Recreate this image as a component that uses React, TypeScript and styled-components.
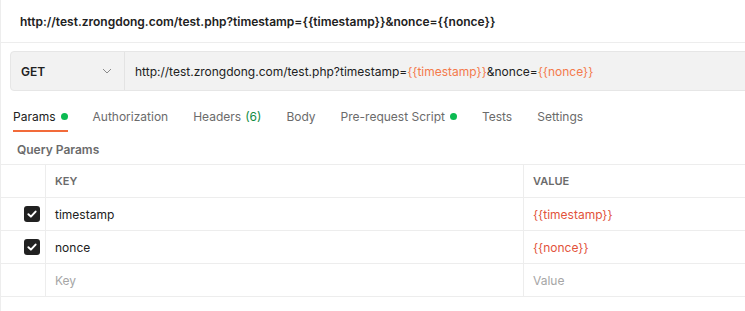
import React from 'react';
import styled, { createGlobalStyle } from 'styled-components';

const GlobalStyle = createGlobalStyle`
  html, body {
    margin: 0;
    padding: 0;
    background: #ffffff;
  }
  body {
    font-family: Inter, "Noto Sans", sans-serif;
    color: #212121;
    -webkit-font-smoothing: antialiased;
  }
`;

interface Param {
  key: string;
  value: string;
}

const params: Param[] = [
  { key: 'timestamp', value: '{{timestamp}}' },
  { key: 'nonce', value: '{{nonce}}' },
];

const tabs = [
  { label: 'Params', active: true, dot: true },
  { label: 'Authorization' },
  { label: 'Headers', count: '(6)' },
  { label: 'Body' },
  { label: 'Pre-request Script', dot: true },
  { label: 'Tests' },
  { label: 'Settings' },
];

const Check = () => (
  <CheckBox>
    <svg width="12" height="12" viewBox="0 0 12 12">
      <path
        d="M2.4 6.2 L4.9 8.6 L9.6 3.6"
        fill="none"
        stroke="#ffffff"
        strokeWidth="2"
        strokeLinecap="round"
        strokeLinejoin="round"
      />
    </svg>
  </CheckBox>
);

export default function App() {
  return (
    <Page>
      <GlobalStyle />
      <TitleBar>
        http://test.zrongdong.com/test.php?timestamp=&#123;&#123;timestamp&#125;&#125;&amp;nonce=&#123;&#123;nonce&#125;&#125;
      </TitleBar>

      <UrlBar>
        <Method>
          <span>GET</span>
          <svg width="10" height="6" viewBox="0 0 10 6">
            <path d="M1 1 L5 5 L9 1" fill="none" stroke="#8a8a8a" strokeWidth="1" />
          </svg>
        </Method>
        <UrlInput>
          http://test.zrongdong.com/test.php?timestamp=
          <Var>{'{{timestamp}}'}</Var>&amp;nonce=<Var>{'{{nonce}}'}</Var>
        </UrlInput>
      </UrlBar>

      <Tabs>
        {tabs.map((t) => (
          <Tab key={t.label} $active={!!t.active}>
            {t.label}
            {t.count && <Count>{t.count}</Count>}
            {t.dot && <Dot />}
          </Tab>
        ))}
      </Tabs>

      <SectionTitle>Query Params</SectionTitle>

      <Table>
        <Row>
          <CheckCell />
          <KeyCell>
            <HeadText>KEY</HeadText>
          </KeyCell>
          <ValueCell>
            <HeadText>VALUE</HeadText>
          </ValueCell>
        </Row>
        {params.map((p) => (
          <Row key={p.key}>
            <CheckCell>
              <Check />
            </CheckCell>
            <KeyCell>{p.key}</KeyCell>
            <ValueCell>
              <VarValue>{p.value}</VarValue>
            </ValueCell>
          </Row>
        ))}
        <Row>
          <CheckCell />
          <KeyCell>
            <Placeholder>Key</Placeholder>
          </KeyCell>
          <ValueCell>
            <Placeholder>Value</Placeholder>
          </ValueCell>
        </Row>
      </Table>
    </Page>
  );
}

const Page = styled.div`
  width: 745px;
  height: 311px;
  box-sizing: border-box;
  border-left: 1px solid #ededed;
  overflow: hidden;
`;

const TitleBar = styled.div`
  height: 43px;
  box-sizing: border-box;
  border-bottom: 1px solid #ededed;
  padding: 0 0 0 19px;
  display: flex;
  align-items: center;
  font-size: 12px;
  font-weight: 600;
  color: #212121;
  white-space: nowrap;
`;

const UrlBar = styled.div`
  margin: 8px 0 0 9px;
  height: 40px;
  width: 760px;
  box-sizing: border-box;
  display: flex;
  background: #f2f2f2;
  border: 1px solid #e6e6e6;
  border-radius: 4px;
`;

const Method = styled.div`
  width: 114px;
  box-sizing: border-box;
  padding: 0 12px 0 10px;
  display: flex;
  align-items: center;
  justify-content: space-between;
  border-right: 1px solid #e3e3e3;
  font-size: 12px;
  font-weight: 600;
  color: #212121;
`;

const UrlInput = styled.div`
  flex: 1;
  display: flex;
  align-items: center;
  padding-left: 10px;
  font-size: 12px;
  color: #212121;
  white-space: pre;
`;

const Var = styled.span`
  color: #f47a4c;
`;

const Tabs = styled.div`
  display: flex;
  gap: 25px;
  margin: 9px 0 0 12px;
  height: 32px;
`;

const Tab = styled.div<{ $active: boolean }>`
  display: flex;
  align-items: flex-start;
  gap: 5px;
  padding-top: 9px;
  box-sizing: border-box;
  font-size: 12px;
  color: ${(p) => (p.$active ? '#212121' : '#6b6b6b')};
  border-bottom: 2px solid ${(p) => (p.$active ? '#f26b3a' : 'transparent')};
  white-space: nowrap;
`;

const Count = styled.span`
  color: #0f8b44;
  margin-left: -1px;
`;

const Dot = styled.span`
  width: 7px;
  height: 7px;
  margin-top: 4px;
  border-radius: 50%;
  background: #0cbb52;
`;

const SectionTitle = styled.div`
  height: 32px;
  box-sizing: border-box;
  padding: 10px 0 0 16px;
  font-size: 12px;
  font-weight: 600;
  color: #6b6b6b;
`;

const Table = styled.div`
  border-top: 1px solid #ededed;
`;

const Row = styled.div`
  display: grid;
  grid-template-columns: 44px 478px 1fr;
  height: 33px;
  box-sizing: border-box;
  border-bottom: 1px solid #ededed;
`;

const Cell = styled.div`
  display: flex;
  align-items: center;
  font-size: 12px;
  color: #212121;
`;

const CheckCell = styled(Cell)`
  justify-content: flex-end;
  padding-right: 5px;
`;

const KeyCell = styled(Cell)`
  border-left: 1px solid #ededed;
  padding-left: 9px;
`;

const ValueCell = styled(Cell)`
  border-left: 1px solid #ededed;
  padding-left: 9px;
`;

const HeadText = styled.span`
  font-size: 11px;
  font-weight: 600;
  color: #6b6b6b;
`;

const VarValue = styled.span`
  color: #e2533b;
`;

const Placeholder = styled.span`
  color: #a6a6a6;
`;

const CheckBox = styled.span`
  width: 16px;
  height: 16px;
  border-radius: 3px;
  background: #212121;
  display: flex;
  align-items: center;
  justify-content: center;
`;
